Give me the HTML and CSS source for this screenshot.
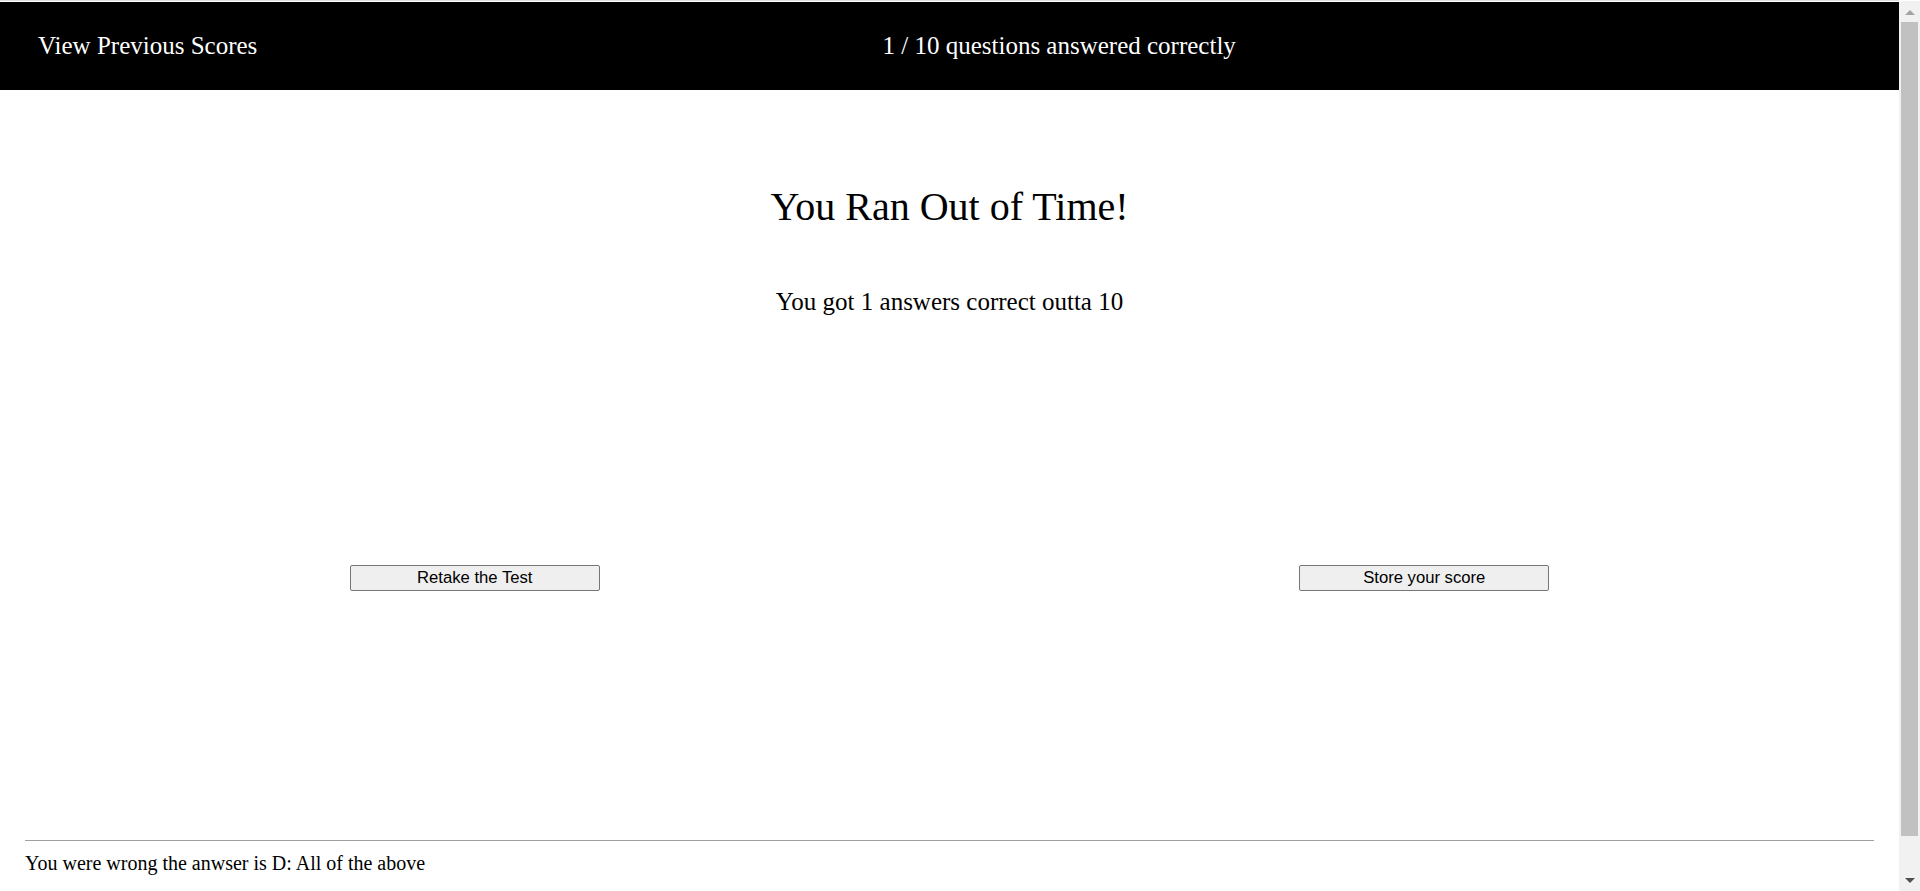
FILE: index.html
```html
<!DOCTYPE html>
<html lang="en">
<head>
<meta charset="utf-8">
<title>Quiz Results</title>
<link rel="stylesheet" href="styles.css">
</head>
<body>
<header class="topbar">
  <a class="topbar-link">View Previous Scores</a>
  <div class="topbar-score">1 / 10 questions answered correctly</div>
</header>
<main class="results">
  <h1 class="results-title">You Ran Out of Time!</h1>
  <p class="results-summary">You got 1 answers correct outta 10</p>
  <div class="results-actions">
    <div class="action-cell"><button class="action-btn">Retake the Test</button></div>
    <div class="action-cell"><button class="action-btn">Store your score</button></div>
  </div>
</main>
<footer class="feedback">
  <hr class="feedback-rule">
  <p class="feedback-text">You were wrong the anwser is D: All of the above</p>
</footer>
<div class="scrollbar" aria-hidden="true">
  <span class="scroll-arrow scroll-up"></span>
  <span class="scroll-thumb"></span>
  <span class="scroll-arrow scroll-down"></span>
</div>
</body>
</html>
```
FILE: styles.css
```css
html, body {
  margin: 0;
  padding: 0;
}
body {
  font-family: "Liberation Serif", "Times New Roman", serif;
  color: #000;
  background: #fff;
  border-top: 1px solid #dcdcdc;
  padding-top: 1px;
  margin-right: 21px;
}
.topbar {
  height: 88px;
  background: #000;
  color: #fff;
  display: flex;
  align-items: center;
  padding: 0 38px;
  font-size: 25px;
}
.topbar-link {
  color: #fff;
  cursor: pointer;
}
.topbar-score {
  flex: 1;
  text-align: center;
}
.results {
  display: flex;
  flex-direction: column;
  align-items: center;
}
.results-title {
  margin: 94px 0 0;
  font-size: 40px;
  font-weight: normal;
  line-height: 46px;
}
.results-summary {
  margin: 57px 0 0;
  font-size: 25px;
  line-height: 29px;
}
.results-actions {
  align-self: stretch;
  display: grid;
  grid-template-columns: 1fr 1fr;
  margin-top: 249px;
}
.action-cell {
  display: flex;
  justify-content: center;
}
.action-btn {
  width: 250px;
  height: 26px;
  font-family: "Liberation Sans", Arial, sans-serif;
  font-size: 16.67px;
  color: #000;
  background: #efefef;
  border: 1px solid #767676;
  border-radius: 2px;
  padding: 0 6px;
}
.feedback {
  padding: 0 25px 60px 25px;
}
.feedback-rule {
  margin: 249px 0 0;
  border: 0;
  border-top: 1px solid #a0a0a0;
  height: 0;
}
.feedback-text {
  margin: 11px 0 0;
  font-size: 20px;
  line-height: 23px;
}
.scrollbar {
  position: fixed;
  top: 1px;
  right: 0;
  bottom: 0;
  width: 21px;
  background: #f1f1f1;
  display: flex;
  flex-direction: column;
  align-items: center;
}
.scroll-arrow {
  width: 0;
  height: 0;
  border-left: 5px solid transparent;
  border-right: 5px solid transparent;
}
.scroll-up {
  margin-top: 9px;
  border-bottom: 5px solid #a3a3a3;
}
.scroll-thumb {
  margin-top: 7px;
  width: 17px;
  height: 814px;
  background: #c1c1c1;
}
.scroll-down {
  margin-top: auto;
  margin-bottom: 8px;
  border-top: 5px solid #505050;
}
```
